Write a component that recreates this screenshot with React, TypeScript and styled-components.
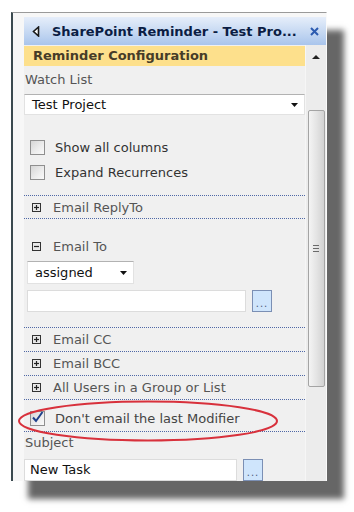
import React from "react";
import styled, { createGlobalStyle } from "styled-components";

const GlobalStyle = createGlobalStyle`
  html, body {
    margin: 0;
    padding: 0;
    background: #ffffff;
  }
  body {
    font-family: "DejaVu Sans", Verdana, sans-serif;
    font-size: 13px;
    color: #4d4d4d;
  }
`;

const Page = styled.div`
  width: 354px;
  height: 512px;
  padding: 12px 0 0 11px;
  box-sizing: border-box;
`;

const Frame = styled.div`
  width: 316px;
  height: 469px;
  box-sizing: border-box;
  border-left: 2px solid #3b4a50;
  border-top: 1px solid #9a9a9a;
  border-right: 1px solid #fafafa;
  background: #f7f7f7;
  padding: 4px 0 0 11px;
  box-shadow: 17px 18px 6px rgba(0, 0, 0, 0.6);
  overflow: hidden;
  display: flex;
  flex-direction: column;
`;

const TitleBar = styled.div`
  height: 28px;
  flex: none;
  display: flex;
  align-items: center;
  background: linear-gradient(180deg, #e6eefa 0%, #c5d8f2 55%, #a9c5ec 100%);
  padding: 0 0 0 8px;
`;

const TitleText = styled.div`
  flex: 1;
  margin-left: 12px;
  font-weight: bold;
  font-size: 13px;
  color: #0b1d44;
  white-space: nowrap;
`;

const CloseBtn = styled.div`
  width: 22px;
  display: flex;
  justify-content: center;
  align-items: center;
  margin-right: 1px;
`;

const Body = styled.div`
  flex: 1;
  display: flex;
  min-height: 0;
`;

const Content = styled.div`
  flex: 1;
  background: #f0f0f0;
  display: flex;
  flex-direction: column;
  min-width: 0;
`;

const Header = styled.div`
  margin-top: 1px;
  height: 20px;
  background: #fde08c;
  color: #463c28;
  font-weight: bold;
  font-size: 13px;
  line-height: 20px;
  padding-left: 9px;
`;

const Label = styled.div<{ top?: number }>`
  margin-top: ${(p) => p.top ?? 0}px;
  height: 20px;
  line-height: 20px;
  padding-left: 1px;
  color: #555555;
`;

const Select = styled.div<{ width?: number; top?: number; left?: number }>`
  margin-top: ${(p) => p.top ?? 0}px;
  margin-left: ${(p) => p.left ?? 0}px;
  width: ${(p) => (p.width ? `${p.width}px` : "auto")};
  height: 23px;
  box-sizing: border-box;
  background: #ffffff;
  border: 1px solid #e2e2e2;
  border-top-color: #b2b2b2;
  display: flex;
  align-items: center;
  padding: 0 6px 0 7px;
  color: #111111;
`;

const SelectValue = styled.span`
  flex: 1;
`;

const CheckGroup = styled.div`
  margin-top: 20px;
  display: flex;
  flex-direction: column;
`;

const CheckRow = styled.div`
  height: 25px;
  display: flex;
  align-items: center;
  padding-left: 6px;
  gap: 10px;
  color: #333333;
`;

const Box = styled.div`
  width: 15px;
  height: 15px;
  box-sizing: border-box;
  border: 1px solid #8f8f8f;
  background: linear-gradient(135deg, #d6d6d6 0%, #eeeeee 60%, #fafafa 100%);
  position: relative;
`;

const Sections = styled.div<{ top?: number }>`
  margin-top: ${(p) => p.top ?? 0}px;
  border-top: 1px dotted #4f68a6;
`;

const Section = styled.div<{ open?: boolean; h?: number }>`
  height: ${(p) => p.h ?? 23}px;
  display: flex;
  align-items: center;
  padding-left: 8px;
  gap: 12px;
  border-bottom: ${(p) => (p.open ? "none" : "1px dotted #4f68a6")};
  color: #555555;
`;

const OpenBlock = styled.div`
  margin-top: 16px;
  padding-bottom: 15px;
  border-bottom: 1px dotted #4f68a6;
`;

const InputRow = styled.div<{ top?: number; left?: number }>`
  margin-top: ${(p) => p.top ?? 0}px;
  margin-left: ${(p) => p.left ?? 0}px;
  display: flex;
  align-items: center;
  gap: 6px;
`;

const TextInput = styled.div<{ width: number }>`
  width: ${(p) => p.width}px;
  height: 22px;
  box-sizing: border-box;
  background: #ffffff;
  border: 1px solid #dcdcdc;
  padding: 0 5px;
  line-height: 20px;
  color: #111111;
`;

const DotsBtn = styled.div`
  width: 20px;
  height: 22px;
  box-sizing: border-box;
  background: #cfe5fc;
  border: 1px solid #7b8fb4;
  display: flex;
  align-items: flex-end;
  justify-content: center;
  font-size: 10px;
  line-height: 14px;
  color: #4d5c7a;
  letter-spacing: 1px;
`;

const ModifierRow = styled.div`
  position: relative;
  height: 32px;
  box-sizing: border-box;
  padding: 6px 0 0 6px;
  display: flex;
  align-items: center;
  gap: 10px;
  border-bottom: 1px dotted #4f68a6;
  color: #444444;
`;

const Annotation = styled.svg`
  position: absolute;
  left: -6px;
  top: 1px;
  pointer-events: none;
  overflow: visible;
`;

const Scrollbar = styled.div`
  width: 20px;
  flex: none;
  background: #ececec;
  border-left: 1px solid #f6f6f6;
  display: flex;
  flex-direction: column;
  align-items: center;
`;

const ArrowUp = styled.div`
  margin-top: 10px;
  width: 0;
  height: 0;
  border-left: 4px solid transparent;
  border-right: 4px solid transparent;
  border-bottom: 4px solid #222222;
`;

const Thumb = styled.div`
  margin-top: 51px;
  width: 17px;
  height: 277px;
  box-sizing: border-box;
  border: 1px solid #a4a4a4;
  border-radius: 2px;
  background: linear-gradient(90deg, #f4f4f4 0%, #e4e4e4 50%, #d2d2d2 100%);
  display: flex;
  flex-direction: column;
  align-items: center;
  justify-content: center;
  gap: 2px;
`;

const Grip = styled.div`
  width: 6px;
  height: 1px;
  background: #6a6a6a;
`;

const Caret = () => (
  <svg width="7" height="4" viewBox="0 0 7 4">
    <polygon points="0,0 7,0 3.5,4" fill="#111" />
  </svg>
);

const Toggle = ({ open }: { open?: boolean }) => (
  <svg width="9" height="9" viewBox="0 0 9 9">
    <rect x="0.5" y="0.5" width="8" height="8" fill="#e8e8e8" stroke="#333" />
    <line x1="2" y1="4.5" x2="7" y2="4.5" stroke="#222" strokeWidth="1.2" />
    {!open && <line x1="4.5" y1="2" x2="4.5" y2="7" stroke="#222" strokeWidth="1.2" />}
  </svg>
);

const Check = () => (
  <svg width="15" height="15" viewBox="0 0 15 15" style={{ position: "absolute", left: -1, top: -2 }}>
    <path d="M3 7.5 L6 11 L12.5 2" fill="none" stroke="#1d3f8a" strokeWidth="2" />
  </svg>
);

export default function App() {
  return (
    <>
      <GlobalStyle />
      <Page>
        <Frame>
          <TitleBar>
            <svg width="8" height="11" viewBox="0 0 8 11">
              <polygon points="6.5,1 1.5,5.5 6.5,10" fill="#fff" stroke="#1a1a1a" strokeWidth="1.6" />
            </svg>
            <TitleText>SharePoint Reminder - Test Pro...</TitleText>
            <CloseBtn>
              <svg width="9" height="9" viewBox="0 0 9 9">
                <path d="M1 1 L8 8 M8 1 L1 8" stroke="#2c5bb0" strokeWidth="2" />
              </svg>
            </CloseBtn>
          </TitleBar>
          <Body>
            <Content>
              <Header>Reminder Configuration</Header>
              <Label top={4}>Watch List</Label>
              <Select top={4}>
                <SelectValue>Test Project</SelectValue>
                <Caret />
              </Select>
              <CheckGroup>
                <CheckRow>
                  <Box />
                  Show all columns
                </CheckRow>
                <CheckRow>
                  <Box />
                  Expand Recurrences
                </CheckRow>
              </CheckGroup>
              <Sections top={10}>
                <Section h={22}>
                  <Toggle />
                  Email ReplyTo
                </Section>
                <OpenBlock>
                  <Section open h={22}>
                    <Toggle open />
                    Email To
                  </Section>
                  <Select top={4} left={3} width={107}>
                    <SelectValue>assigned</SelectValue>
                    <Caret />
                  </Select>
                  <InputRow top={6} left={3}>
                    <TextInput width={219} />
                    <DotsBtn>...</DotsBtn>
                  </InputRow>
                </OpenBlock>
                <Section>
                  <Toggle />
                  Email CC
                </Section>
                <Section>
                  <Toggle />
                  Email BCC
                </Section>
                <Section>
                  <Toggle />
                  All Users in a Group or List
                </Section>
                <ModifierRow>
                  <Box>
                    <Check />
                  </Box>
                  Don't email the last Modifier
                  <Annotation width="262" height="42" viewBox="0 0 262 42">
                    <ellipse cx="130" cy="20" rx="129" ry="19.5" fill="none" stroke="#d8313c" strokeWidth="2" />
                  </Annotation>
                </ModifierRow>
              </Sections>
              <Label top={1}>Subject</Label>
              <InputRow top={6}>
                <TextInput width={213}>New Task</TextInput>
                <DotsBtn>...</DotsBtn>
              </InputRow>
            </Content>
            <Scrollbar>
              <ArrowUp />
              <Thumb>
                <Grip />
                <Grip />
                <Grip />
              </Thumb>
            </Scrollbar>
          </Body>
        </Frame>
      </Page>
    </>
  );
}
